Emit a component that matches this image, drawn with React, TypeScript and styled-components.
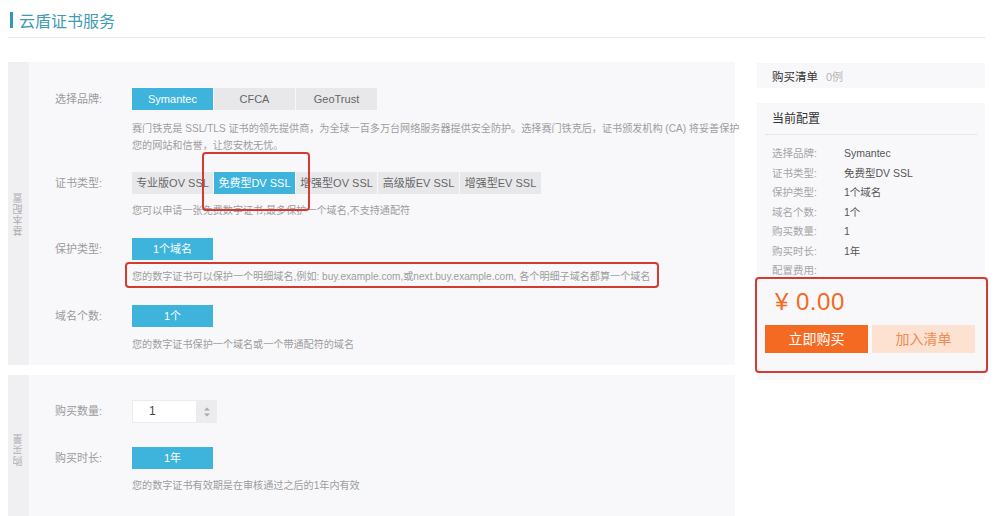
import React from "react";
import styled, { createGlobalStyle } from "styled-components";

const Global = createGlobalStyle`
  html, body { margin: 0; padding: 0; background: #fff; }
  body { font-family: "Liberation Sans", "Noto Sans CJK SC", sans-serif; color: #333; }
  * { box-sizing: border-box; }
`;

const Page = styled.div`
  position: relative;
  width: 1000px;
  height: 516px;
  overflow: hidden;
  padding: 0 15px 0 8px;
`;

const Header = styled.div`
  display: flex;
  align-items: center;
  gap: 6px;
  height: 38px;
  padding: 3px 0 0 2px;
  border-bottom: 1px solid #e6e6e6;
`;

const HeaderBar = styled.span`
  width: 3px;
  height: 16px;
  background: #2d9cb5;
`;

const HeaderTitle = styled.h1`
  margin: 0;
  font-size: 16px;
  font-weight: 400;
  color: #3f9bb2;
`;

const Body = styled.div`
  display: flex;
  gap: 22px;
  margin-top: 24px;
`;

const LeftCol = styled.div`
  width: 727px;
  display: flex;
  flex-direction: column;
  gap: 10px;
`;

const Panel = styled.section<{ $pt: number; $pb: number }>`
  display: flex;
  background: #f8f8fa;
  & > div:last-child {
    padding: ${(p) => p.$pt}px 0 ${(p) => p.$pb}px 25px;
  }
`;

const Strip = styled.div`
  width: 22px;
  flex: none;
  background: #f0eff2;
  display: flex;
  align-items: center;
  justify-content: center;
  border-right: 1px solid #fbfbfc;
`;

const StripText = styled.span`
  writing-mode: vertical-rl;
  transform: rotate(180deg);
  font-size: 10px;
  color: #b0b0b4;
  letter-spacing: 1px;
`;

const PanelBody = styled.div`
  flex: 1;
  display: flex;
  flex-direction: column;
`;

const Field = styled.div<{ $mb?: number }>`
  display: flex;
  margin-bottom: ${(p) => p.$mb ?? 19}px;
`;

const Label = styled.div<{ $h?: number }>`
  width: 77px;
  flex: none;
  height: ${(p) => p.$h ?? 22}px;
  line-height: ${(p) => p.$h ?? 22}px;
  font-size: 11px;
  color: #9b9b9b;
`;

const FieldMain = styled.div`
  display: flex;
  flex-direction: column;
`;

const BtnRow = styled.div`
  display: flex;
  gap: 1px;
`;

const OptBtn = styled.div<{ $active?: boolean }>`
  width: 81px;
  height: 22px;
  line-height: 22px;
  text-align: center;
  font-size: 11px;
  background: ${(p) => (p.$active ? "#3eb4dc" : "#e8e8ea")};
  color: ${(p) => (p.$active ? "#fff" : "#666")};
`;

const Hint = styled.div<{ $mt?: number }>`
  margin-top: ${(p) => p.$mt ?? 8}px;
  font-size: 10.1px;
  line-height: 17px;
  color: #9d9d9d;
  white-space: nowrap;
`;

const NumInput = styled.div`
  display: flex;
  height: 23px;
`;

const NumField = styled.div`
  width: 65px;
  background: #fff;
  border: 1px solid #ececec;
  font-size: 12px;
  color: #444;
  line-height: 21px;
  padding-left: 16px;
`;

const Spinner = styled.div`
  width: 20px;
  background: #ececee;
  display: flex;
  align-items: center;
  justify-content: center;
`;

const RightCol = styled.div`
  width: 228px;
  display: flex;
  flex-direction: column;
  gap: 15px;
  margin-top: 1px;
`;

const Card = styled.div`
  background: #f8f8fa;
`;

const ListCard = styled(Card)`
  height: 25px;
  display: flex;
  align-items: center;
  gap: 8px;
  padding-left: 15px;
  font-size: 11.5px;
  color: #333;
`;

const Muted = styled.span`
  color: #b5b5b5;
  font-size: 11px;
`;

const ConfCard = styled(Card)`
  padding: 0 8px 27px;
`;

const ConfHead = styled.div`
  height: 32px;
  line-height: 32px;
  padding-left: 7px;
  font-size: 12px;
  color: #333;
  border-bottom: 1px solid #e6e6e8;
`;

const ConfRows = styled.div`
  padding: 8px 0 0 7px;
  display: grid;
  grid-template-columns: 72px 1fr;
  grid-auto-rows: 19.5px;
  align-items: center;
  font-size: 10.5px;
`;

const CLabel = styled.span`
  color: #a5a5a5;
`;

const CValue = styled.span`
  color: #555;
`;

const Price = styled.div`
  margin: 7px 0 0 10px;
  font-size: 24px;
  line-height: 30px;
  color: #f26a21;
  letter-spacing: 0.5px;
`;

const ActionRow = styled.div`
  display: flex;
  gap: 4px;
  margin-top: 8px;
`;

const ActionBtn = styled.div<{ $primary?: boolean }>`
  width: 103px;
  height: 28px;
  line-height: 28px;
  text-align: center;
  font-size: 14px;
  background: ${(p) => (p.$primary ? "#f56a22" : "#fde2d2")};
  color: ${(p) => (p.$primary ? "#fff" : "#f08a50")};
`;

const Mark = styled.div`
  position: absolute;
  border: 2px solid #d23a32;
  border-radius: 4px;
  pointer-events: none;
`;

export default function App() {
  return (
    <>
      <Global />
      <Page>
        <Header>
          <HeaderBar />
          <HeaderTitle>云盾证书服务</HeaderTitle>
        </Header>
        <Body>
          <LeftCol>
            <Panel $pt={26} $pb={15} style={{ height: 303 }}>
              <Strip>
                <StripText>基本配置</StripText>
              </Strip>
              <PanelBody>
                <Field $mb={18}>
                  <Label>选择品牌:</Label>
                  <FieldMain>
                    <BtnRow>
                      <OptBtn $active>Symantec</OptBtn>
                      <OptBtn>CFCA</OptBtn>
                      <OptBtn>GeoTrust</OptBtn>
                    </BtnRow>
                    <Hint $mt={10}>
                      赛门铁克是 SSL/TLS 证书的领先提供商，为全球一百多万台网络服务器提供安全防护。选择赛门铁克后，证书颁发机构 (CA) 将妥善保护
                      <br />
                      您的网站和信誉，让您安枕无忧。
                    </Hint>
                  </FieldMain>
                </Field>
                <Field>
                  <Label>证书类型:</Label>
                  <FieldMain>
                    <BtnRow>
                      <OptBtn>专业版OV SSL</OptBtn>
                      <OptBtn $active>免费型DV SSL</OptBtn>
                      <OptBtn>增强型OV SSL</OptBtn>
                      <OptBtn>高级版EV SSL</OptBtn>
                      <OptBtn>增强型EV SSL</OptBtn>
                    </BtnRow>
                    <Hint>您可以申请一张免费数字证书,最多保护一个域名,不支持通配符</Hint>
                  </FieldMain>
                </Field>
                <Field $mb={20}>
                  <Label>保护类型:</Label>
                  <FieldMain>
                    <BtnRow>
                      <OptBtn $active>1个域名</OptBtn>
                    </BtnRow>
                    <Hint>
                      您的数字证书可以保护一个明细域名,例如: buy.example.com,或next.buy.example.com, 各个明细子域名都算一个域名
                    </Hint>
                  </FieldMain>
                </Field>
                <Field $mb={0}>
                  <Label>域名个数:</Label>
                  <FieldMain>
                    <BtnRow>
                      <OptBtn $active>1个</OptBtn>
                    </BtnRow>
                    <Hint $mt={9}>您的数字证书保护一个域名或一个带通配符的域名</Hint>
                  </FieldMain>
                </Field>
              </PanelBody>
            </Panel>
            <Panel $pt={25} $pb={30}>
              <Strip>
                <StripText>购买量</StripText>
              </Strip>
              <PanelBody>
                <Field $mb={24}>
                  <Label $h={23}>购买数量:</Label>
                  <NumInput>
                    <NumField>1</NumField>
                    <Spinner>
                      <svg width="10" height="14" viewBox="0 0 10 14">
                        <path d="M2 5.5 L5 2.5 L8 5.5 Z" fill="#a8a8a8" />
                        <path d="M2 8.5 L5 11.5 L8 8.5 Z" fill="#a8a8a8" />
                      </svg>
                    </Spinner>
                  </NumInput>
                </Field>
                <Field $mb={0}>
                  <Label>购买时长:</Label>
                  <FieldMain>
                    <BtnRow>
                      <OptBtn $active>1年</OptBtn>
                    </BtnRow>
                    <Hint>您的数字证书有效期是在审核通过之后的1年内有效</Hint>
                  </FieldMain>
                </Field>
              </PanelBody>
            </Panel>
          </LeftCol>
          <RightCol>
            <ListCard>
              购买清单 <Muted>0例</Muted>
            </ListCard>
            <ConfCard>
              <ConfHead>当前配置</ConfHead>
              <ConfRows>
                <CLabel>选择品牌:</CLabel>
                <CValue>Symantec</CValue>
                <CLabel>证书类型:</CLabel>
                <CValue>免费型DV SSL</CValue>
                <CLabel>保护类型:</CLabel>
                <CValue>1个域名</CValue>
                <CLabel>域名个数:</CLabel>
                <CValue>1个</CValue>
                <CLabel>购买数量:</CLabel>
                <CValue>1</CValue>
                <CLabel>购买时长:</CLabel>
                <CValue>1年</CValue>
                <CLabel>配置费用:</CLabel>
                <CValue />
              </ConfRows>
              <Price>¥ 0.00</Price>
              <ActionRow>
                <ActionBtn $primary>立即购买</ActionBtn>
                <ActionBtn>加入清单</ActionBtn>
              </ActionRow>
            </ConfCard>
          </RightCol>
        </Body>
        <Mark style={{ left: 202, top: 152, width: 108, height: 59 }} />
        <Mark style={{ left: 125, top: 262, width: 534, height: 26 }} />
        <Mark style={{ left: 755, top: 277, width: 233, height: 96 }} />
      </Page>
    </>
  );
}
